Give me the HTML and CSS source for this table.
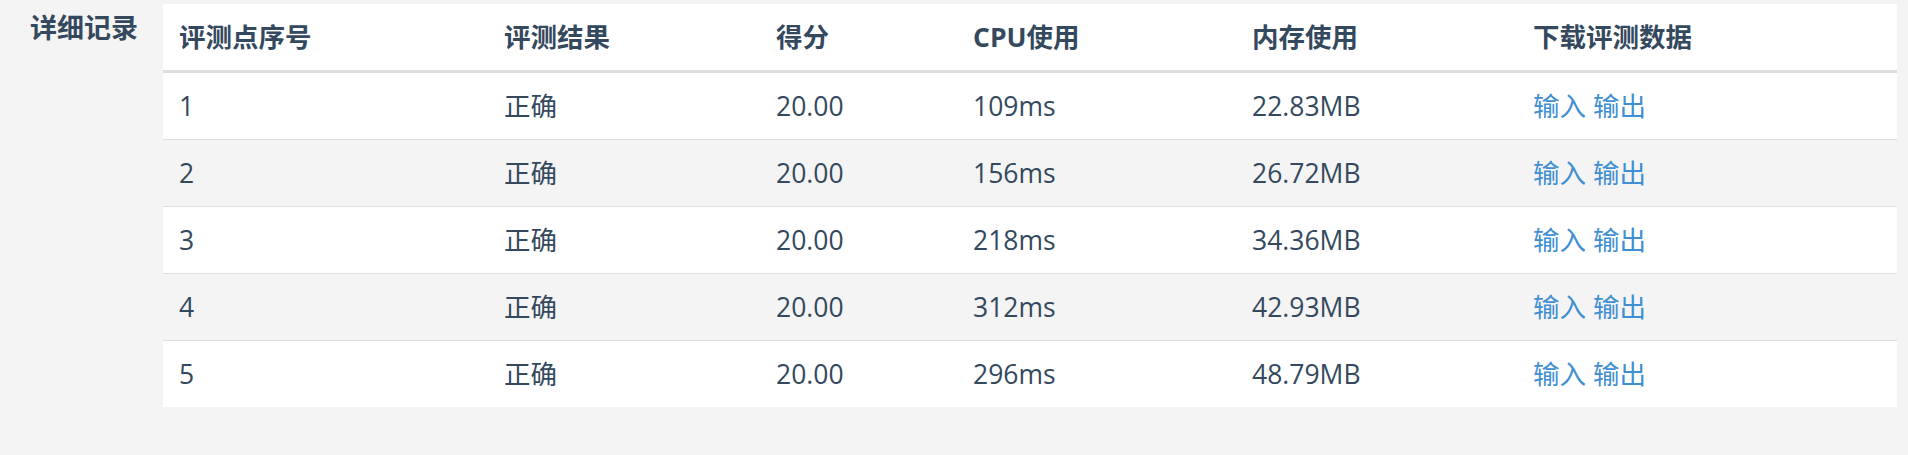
FILE: index.html
```html
<!DOCTYPE html>
<html lang="zh-CN">
<head>
<meta charset="utf-8">
<title>详细记录</title>
<link rel="stylesheet" href="styles.css">
</head>
<body>
<div class="page">
  <div class="label">详细记录</div>
  <table class="records">
    <colgroup>
      <col class="c1"><col class="c2"><col class="c3"><col class="c4"><col class="c5"><col class="c6">
    </colgroup>
    <thead>
      <tr><th>评测点序号</th><th>评测结果</th><th>得分</th><th>CPU使用</th><th>内存使用</th><th>下载评测数据</th></tr>
    </thead>
    <tbody>
      <tr><td>1</td><td>正确</td><td>20.00</td><td>109ms</td><td>22.83MB</td><td><a href="#">输入</a> <a href="#">输出</a></td></tr>
      <tr><td>2</td><td>正确</td><td>20.00</td><td>156ms</td><td>26.72MB</td><td><a href="#">输入</a> <a href="#">输出</a></td></tr>
      <tr><td>3</td><td>正确</td><td>20.00</td><td>218ms</td><td>34.36MB</td><td><a href="#">输入</a> <a href="#">输出</a></td></tr>
      <tr><td>4</td><td>正确</td><td>20.00</td><td>312ms</td><td>42.93MB</td><td><a href="#">输入</a> <a href="#">输出</a></td></tr>
      <tr><td>5</td><td>正确</td><td>20.00</td><td>296ms</td><td>48.79MB</td><td><a href="#">输入</a> <a href="#">输出</a></td></tr>
    </tbody>
  </table>
</div>
</body>
</html>
```

FILE: styles.css
```css
html, body {
  margin: 0;
  padding: 0;
  background: #f4f4f4;
  height: 100%;
}
body {
  font-family: "Open Sans", "Noto Sans CJK SC", sans-serif;
  color: #34495e;
  font-size: 26.5px;
}
.page {
  display: flex;
  align-items: flex-start;
  padding: 4px 11px 0 0;
}
.label {
  width: 163px;
  flex: none;
  box-sizing: border-box;
  padding: 8px 0 0 30px;
  font-weight: bold;
  font-size: 27px;
  line-height: 30px;
  font-family: "Noto Sans CJK SC", sans-serif;
}
.records {
  width: 1734px;
  flex: none;
  border-collapse: collapse;
  table-layout: fixed;
  background: #fff;
}
.c1 { width: 325px; }
.c2 { width: 272px; }
.c3 { width: 197px; }
.c4 { width: 279px; }
.c5 { width: 281px; }
.c6 { width: 380px; }
.records th,
.records td {
  text-align: left;
  padding: 0 16px;
  vertical-align: middle;
  white-space: nowrap;
  line-height: 36px;
}
.records th {
  height: 66px;
  font-weight: bold;
  border-bottom: 3px solid #dddddd;
}
.records td {
  height: 66px;
  border-top: 1px solid #e0e0e0;
}
.records tbody tr:first-child td {
  border-top: none;
}
.records tbody tr:nth-child(even) td {
  background: #f4f4f4;
}
.records a {
  color: #3f8fd2;
  text-decoration: none;
}
```
